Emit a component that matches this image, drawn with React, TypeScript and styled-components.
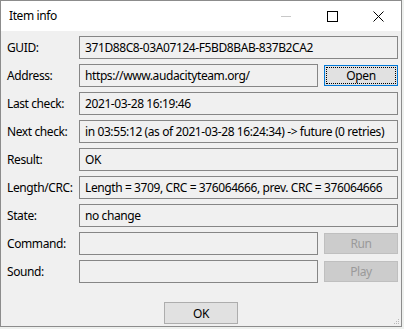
import { Fragment } from "react";
import styled, { createGlobalStyle } from "styled-components";

const GlobalStyle = createGlobalStyle`
  html, body {
    margin: 0;
    padding: 0;
    background: #eef0ee;
  }
  body {
    font-family: "Noto Sans", "Open Sans", sans-serif;
    font-size: 12px;
    letter-spacing: -0.4px;
    color: #000;
  }
`;

const Window = styled.div`
  width: 402px;
  height: 327px;
  box-sizing: border-box;
  border: 1px solid #8c8c8c;
  background: #f0f0f0;
  display: flex;
  flex-direction: column;
  position: relative;
`;

const TitleBar = styled.div`
  height: 30px;
  background: #ffffff;
  display: flex;
  align-items: center;
`;

const Title = styled.div`
  flex: 1;
  padding-left: 8px;
  padding-bottom: 2px;
`;

const CaptionButton = styled.div`
  width: 46px;
  height: 30px;
  display: flex;
  align-items: center;
  justify-content: center;
`;

const Content = styled.div`
  flex: 1;
  padding: 5px 3px 0 6px;
  display: flex;
  flex-direction: column;
`;

const Grid = styled.div`
  display: grid;
  grid-template-columns: 66px 239px 74px;
  column-gap: 6px;
  row-gap: 5px;
  grid-auto-rows: 23px;
`;

const Label = styled.div`
  display: flex;
  align-items: center;
  white-space: nowrap;
  padding-bottom: 1px;
`;

const Field = styled.div<{ $wide?: boolean }>`
  grid-column: ${({ $wide }) => ($wide ? "2 / span 2" : "2")};
  box-sizing: border-box;
  border: 1px solid #868686;
  background: #f0f0f0;
  padding: 0 0 1px 5px;
  display: flex;
  align-items: center;
  white-space: nowrap;
  overflow: hidden;
`;

const Button = styled.div<{ $default?: boolean; $disabled?: boolean }>`
  box-sizing: border-box;
  height: 21px;
  margin-top: 1px;
  border: 1px solid
    ${({ $default, $disabled }) =>
      $default ? "#0078d7" : $disabled ? "#bfbfbf" : "#adadad"};
  background: ${({ $disabled }) => ($disabled ? "#cccccc" : "#e1e1e1")};
  color: ${({ $disabled }) => ($disabled ? "#9a9a9a" : "#000")};
  display: flex;
  align-items: center;
  justify-content: center;
  padding: 1px;
`;

const FocusRect = styled.div`
  width: 100%;
  height: 100%;
  box-sizing: border-box;
  border: 1px dotted #000;
  display: flex;
  align-items: center;
  justify-content: center;
  padding-bottom: 1px;
`;

const Footer = styled.div`
  display: flex;
  justify-content: center;
  padding-top: 19px;
  padding-right: 3px;
`;

const OkButton = styled(Button)`
  width: 74px;
  height: 22px;
  margin-top: 0;
`;

const Grip = styled.svg`
  position: absolute;
  right: 2px;
  bottom: 2px;
`;

const rows: { label: string; value: string; button?: string; def?: boolean }[] = [
  { label: "GUID:", value: "371D88C8-03A07124-F5BD8BAB-837B2CA2" },
  { label: "Address:", value: "https://www.audacityteam.org/", button: "Open", def: true },
  { label: "Last check:", value: "2021-03-28 16:19:46" },
  {
    label: "Next check:",
    value: "in 03:55:12 (as of 2021-03-28 16:24:34) -> future (0 retries)",
  },
  { label: "Result:", value: "OK" },
  { label: "Length/CRC:", value: "Length = 3709, CRC = 376064666, prev. CRC = 376064666" },
  { label: "State:", value: "no change" },
  { label: "Command:", value: "", button: "Run" },
  { label: "Sound:", value: "", button: "Play" },
];

export default function App() {
  return (
    <>
      <GlobalStyle />
      <Window>
        <TitleBar>
          <Title>Item info</Title>
          <CaptionButton>
            <svg width="10" height="10" viewBox="0 0 10 10">
              <path d="M0 5.5h10" stroke="#c8c8c8" strokeWidth="1" />
            </svg>
          </CaptionButton>
          <CaptionButton>
            <svg width="11" height="11" viewBox="0 0 11 11">
              <rect x="0.5" y="0.5" width="10" height="10" fill="none" stroke="#000" />
            </svg>
          </CaptionButton>
          <CaptionButton>
            <svg width="11" height="11" viewBox="0 0 11 11">
              <path d="M0.5 0.5l10 10M10.5 0.5l-10 10" stroke="#000" strokeWidth="1" />
            </svg>
          </CaptionButton>
        </TitleBar>
        <Content>
          <Grid>
            {rows.map((r) => (
              <Fragment key={r.label}>
                <Label>{r.label}</Label>
                <Field $wide={!r.button}>{r.value}</Field>
                {r.button &&
                  (r.def ? (
                    <Button $default>
                      <FocusRect>{r.button}</FocusRect>
                    </Button>
                  ) : (
                    <Button $disabled>{r.button}</Button>
                  ))}
              </Fragment>
            ))}
          </Grid>
          <Footer>
            <OkButton>OK</OkButton>
          </Footer>
        </Content>
        <Grip width="5" height="5" viewBox="0 0 5 5">
          <rect x="4" y="0" width="1" height="1" fill="#b8b8b8" />
          <rect x="2" y="2" width="1" height="1" fill="#b8b8b8" />
          <rect x="4" y="2" width="1" height="1" fill="#b8b8b8" />
          <rect x="0" y="4" width="1" height="1" fill="#b8b8b8" />
          <rect x="2" y="4" width="1" height="1" fill="#b8b8b8" />
          <rect x="4" y="4" width="1" height="1" fill="#b8b8b8" />
        </Grip>
      </Window>
    </>
  );
}
